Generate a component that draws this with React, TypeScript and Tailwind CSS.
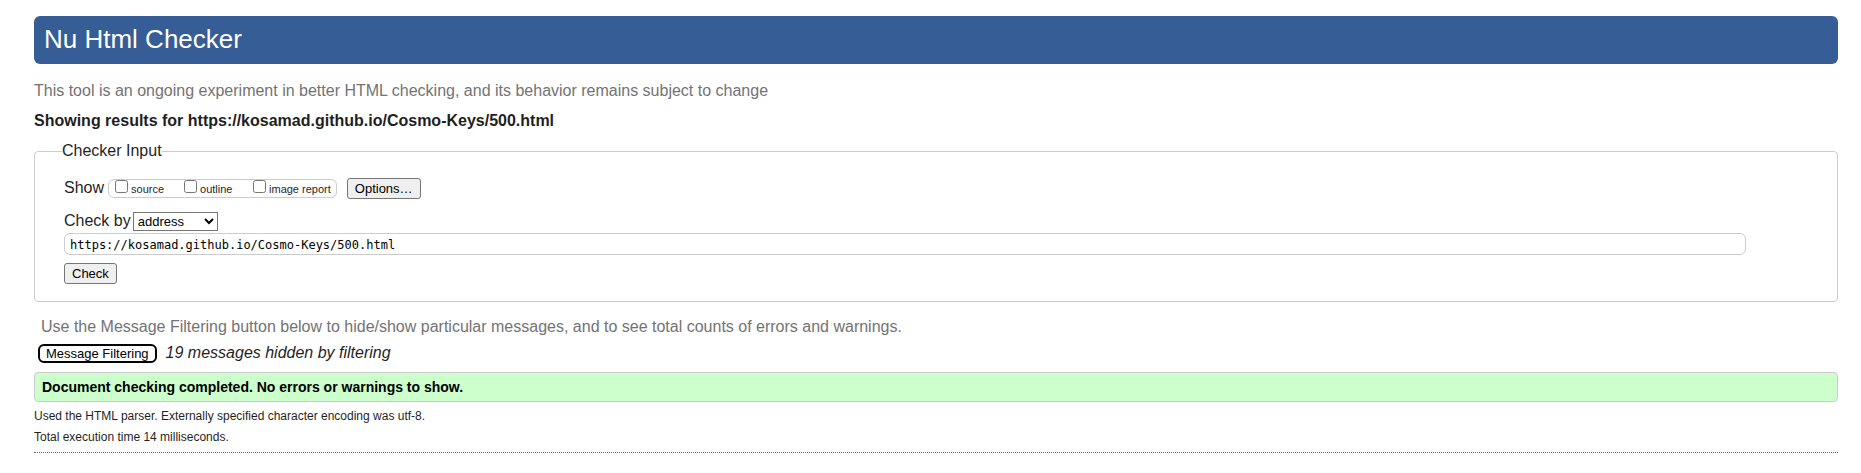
const outputs = [
  { id: "source", label: "source", width: "w-[69px]" },
  { id: "outline", label: "outline", width: "w-[69px]" },
  { id: "imagereport", label: "image report", width: "" },
];

const buttonClass =
  "rounded-[3px] border border-[#767676] bg-[#efefef] px-[7px] text-[13px] leading-[19px] text-black";

function CheckerForm() {
  return (
    <form onSubmit={(event) => event.preventDefault()}>
      <fieldset className="rounded-[4px] border border-[#ccc] pr-[91px] pb-[17px] pl-[29px]">
        <legend className="-ml-[2px] text-base leading-[20px]">Checker Input</legend>
        <div className="mt-[16px] flex items-center">
          <span className="text-base leading-[22px]">Show</span>
          <div className="ml-[4px] flex h-[19px] items-start rounded-[6px] border border-[#ccc] pr-[5px] pl-[6px]">
            {outputs.map((output) => (
              <div key={output.id} className={`flex gap-[3px] ${output.width}`}>
                <input id={output.id} type="checkbox" className="size-[13px]" />
                <label htmlFor={output.id} className="pt-[1px] text-[11px] leading-[16px]">
                  {output.label}
                </label>
              </div>
            ))}
          </div>
          <button type="button" className={`ml-[10px] ${buttonClass}`}>
            Options…
          </button>
        </div>
        <div className="mt-[12px] flex items-center">
          <label htmlFor="docselect" className="text-base leading-[20px]">
            Check by
          </label>
          <select
            id="docselect"
            defaultValue="address"
            className="ml-[2px] h-[19px] w-[85px] border border-[#767676] bg-white text-[13px] text-black"
          >
            <option value="address">address</option>
            <option value="file">file upload</option>
            <option value="text">text input</option>
          </select>
        </div>
        <input
          type="url"
          aria-label="Address of page to check"
          defaultValue="https://kosamad.github.io/Cosmo-Keys/500.html"
          className="mt-[2px] block h-[22px] w-full rounded-[6px] border border-[#ccc] px-[5px] pt-[2px] font-['DejaVu_Sans_Mono',monospace] text-xs text-black"
        />
        <button type="submit" className={`mt-[8px] block ${buttonClass}`}>
          Check
        </button>
      </fieldset>
    </form>
  );
}

export default function App() {
  return (
    <div className="bg-white pt-[16px] pr-[23px] pb-5 pl-[34px] font-['Liberation_Sans',Arial,sans-serif] text-base text-[#1f1f1f]">
      <header className="rounded-[6px] bg-[#365d95] px-[10px] pb-[2px]">
        <h1 className="text-[26px] leading-[46px] text-white">Nu Html Checker</h1>
      </header>
      <main>
        <p className="mt-[17px] leading-[20px] text-[#737373]">
          This tool is an ongoing experiment in better HTML checking, and its behavior remains subject to change
        </p>
        <h2 className="mt-[10px] mb-[10px] leading-[20px] font-bold">
          Showing results for https://kosamad.github.io/Cosmo-Keys/500.html
        </h2>
        <CheckerForm />
        <p className="mt-[15px] pl-[7px] leading-[20px] text-[#737373]">
          Use the Message Filtering button below to hide/show particular messages, and to see total counts of errors
          and warnings.
        </p>
        <div className="mt-[6px] flex items-center pl-[4px]">
          <button
            type="button"
            className="rounded-[6px] border-2 border-black bg-white px-[6px] text-[13px] leading-[15px] text-black"
          >
            Message Filtering
          </button>
          <span className="ml-[9px] leading-[20px] italic">19 messages hidden by filtering</span>
        </div>
        <p className="mt-[9px] rounded-[4px] border border-[#ccc] bg-[#ccffcc] px-[7px] text-sm leading-[28px] font-bold text-black">
          Document checking completed. No errors or warnings to show.
        </p>
        <p className="mt-[4px] text-xs leading-[20px]">
          Used the HTML parser. Externally specified character encoding was utf-8.
        </p>
        <p className="mt-[1px] text-xs leading-[20px]">Total execution time 14 milliseconds.</p>
        <hr className="mt-[5px] border-t border-dotted border-[#666]" />
      </main>
    </div>
  );
}
